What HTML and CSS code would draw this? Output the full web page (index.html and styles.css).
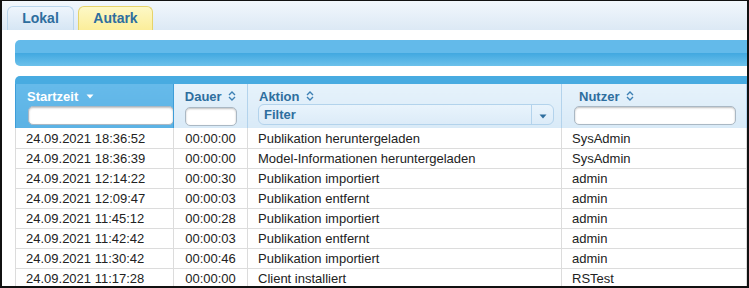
FILE: index.html
```html
<!DOCTYPE html>
<html lang="de">
<head>
    <meta charset="UTF-8">
    <title>Protokoll</title>
    <link rel="stylesheet" href="styles.css">
</head>
<body>
    <div class="frame">
        <div class="tabs">
            <div class="tab">Lokal</div>
            <div class="tab active">Autark</div>
        </div>

        <div class="toolbar"></div>

        <div class="grid">
            <div class="grid-top"></div>
            <table>
                <colgroup>
                    <col class="c-start">
                    <col class="c-dauer">
                    <col class="c-aktion">
                    <col class="c-nutzer">
                </colgroup>
                <thead>
                    <tr>
                        <th class="sorted">
                            <div class="label">Startzeit
                                <svg class="caret" width="8" height="5" viewBox="0 0 8 5"><path d="M0.5 0.5h7L4 4.5z" fill="#fff"/></svg>
                            </div>
                            <input class="filter" type="text">
                        </th>
                        <th class="center">
                            <div class="label">Dauer
                                <svg class="sort" width="8" height="10" viewBox="0 0 8 10"><path d="M1 4L4 1l3 3M1 6l3 3 3-3" fill="none" stroke="#3d80b4" stroke-width="1.4"/></svg>
                            </div>
                            <input class="filter short" type="text">
                        </th>
                        <th>
                            <div class="label">Aktion
                                <svg class="sort" width="8" height="10" viewBox="0 0 8 10"><path d="M1 4L4 1l3 3M1 6l3 3 3-3" fill="none" stroke="#3d80b4" stroke-width="1.4"/></svg>
                            </div>
                            <div class="select">
                                <span>Filter</span>
                                <span class="arrow"><svg width="8" height="5" viewBox="0 0 8 5"><path d="M0.5 0.5h7L4 4.5z" fill="#2e6e9e"/></svg></span>
                            </div>
                        </th>
                        <th class="last">
                            <div class="label">Nutzer
                                <svg class="sort" width="8" height="10" viewBox="0 0 8 10"><path d="M1 4L4 1l3 3M1 6l3 3 3-3" fill="none" stroke="#3d80b4" stroke-width="1.4"/></svg>
                            </div>
                            <input class="filter" type="text">
                        </th>
                    </tr>
                </thead>
                <tbody>
                    <tr><td>24.09.2021 18:36:52</td><td class="center">00:00:00</td><td>Publikation heruntergeladen</td><td>SysAdmin</td></tr>
                    <tr><td>24.09.2021 18:36:39</td><td class="center">00:00:00</td><td>Model-Informationen heruntergeladen</td><td>SysAdmin</td></tr>
                    <tr><td>24.09.2021 12:14:22</td><td class="center">00:00:30</td><td>Publikation importiert</td><td>admin</td></tr>
                    <tr><td>24.09.2021 12:09:47</td><td class="center">00:00:03</td><td>Publikation entfernt</td><td>admin</td></tr>
                    <tr><td>24.09.2021 11:45:12</td><td class="center">00:00:28</td><td>Publikation importiert</td><td>admin</td></tr>
                    <tr><td>24.09.2021 11:42:42</td><td class="center">00:00:03</td><td>Publikation entfernt</td><td>admin</td></tr>
                    <tr><td>24.09.2021 11:30:42</td><td class="center">00:00:46</td><td>Publikation importiert</td><td>admin</td></tr>
                    <tr><td>24.09.2021 11:17:28</td><td class="center">00:00:00</td><td>Client installiert</td><td>RSTest</td></tr>
                </tbody>
            </table>
        </div>
    </div>
</body>
</html>
```

FILE: styles.css
```css
* {
    margin: 0;
    padding: 0;
    box-sizing: border-box;
}

body {
    font-family: "Liberation Sans", Arial, sans-serif;
    font-size: 13px;
    background: #fff;
}

.frame {
    width: 749px;
    height: 288px;
    overflow: hidden;
    border: 2px solid #111;
    border-top-width: 1px;
    background: #fff;
}

/* tabs */
.tabs {
    height: 29px;
    display: flex;
    align-items: flex-end;
    gap: 4px;
    padding-left: 5px;
    background: linear-gradient(to bottom, #f2f7fc, #dce9f5);
}

.tab {
    height: 24px;
    width: 67px;
    text-align: center;
    line-height: 23px;
    font-size: 14px;
    font-weight: bold;
    color: #2e6e9e;
    border: 1px solid #b9d5ec;
    border-bottom: none;
    border-radius: 6px 6px 0 0;
    background: linear-gradient(to bottom, #eef5fc, #d6e6f4);
}

.tab.active {
    width: 75px;
    border-color: #e6d36a;
    background: linear-gradient(to bottom, #fdf8c6, #fbee9a);
}

/* toolbar */
.toolbar {
    margin: 10px 0 0 13px;
    height: 26px;
    border-radius: 5px 0 0 5px;
    background: linear-gradient(to bottom, #63baea 0%, #63baea 50%, #41a8e0 50%, #6cc1eb 100%);
}

/* grid */
.grid {
    margin: 10px 0 0 13px;
}

.grid-top {
    height: 8px;
    border-radius: 5px 0 0 0;
    background: #48abe1;
}

table {
    width: 731px;
    table-layout: fixed;
    border-collapse: collapse;
}

.c-start { width: 158px; }
.c-dauer { width: 74px; }
.c-aktion { width: 314px; }
.c-nutzer { width: 185px; }

th {
    height: 44px;
    padding: 5px 0 0 11px;
    text-align: left;
    vertical-align: top;
    font-weight: bold;
    color: #2e6e9e;
    background: linear-gradient(to bottom, #e6f2fb, #d9eaf7);
    border-left: 1px solid #b3d3ec;
    border-right: 1px solid #b3d3ec;
}

th.sorted {
    color: #fff;
    background: linear-gradient(to bottom, #66baea, #5bb2e4);
    border-left-color: #3d9dd8;
    border-right-color: #3d9dd8;
}

th.center {
    padding-left: 0;
    text-align: center;
}

th.last {
    padding-left: 17px;
}

.label {
    height: 17px;
    line-height: 15px;
    white-space: nowrap;
}

.caret {
    margin-left: 4px;
    vertical-align: 2px;
}

.sort {
    margin-left: 3px;
    vertical-align: 0;
}

.filter {
    display: block;
    width: 146px;
    height: 19px;
    margin-left: 1px;
    border: 1px solid #aab8c4;
    border-radius: 5px;
    background: #fff;
    box-shadow: inset 0 1px 2px rgba(0, 0, 0, 0.25);
}

th.center .filter {
    width: 52px;
    margin: 1px auto 0;
}

th.last .filter {
    width: 162px;
    margin-left: -5px;
}

.select {
    display: flex;
    height: 21px;
    width: 296px;
    margin-left: -1px;
    margin-top: -2px;
    border: 1px solid #b3d3ec;
    border-radius: 6px;
    background: linear-gradient(to bottom, #e9f4fc, #dcebf8);
    line-height: 19px;
}

.select span:first-child {
    flex: 1;
    padding-left: 5px;
}

.arrow {
    width: 22px;
    border-left: 1px solid #b3d3ec;
    text-align: center;
}

.arrow svg {
    vertical-align: 0;
}

td {
    height: 20px;
    padding: 1px 0 0 10px;
    color: #222;
    white-space: nowrap;
    overflow: hidden;
    border: 1px solid #dcdcdc;
    border-top: none;
}

td.center {
    padding-left: 0;
    text-align: center;
}
```
